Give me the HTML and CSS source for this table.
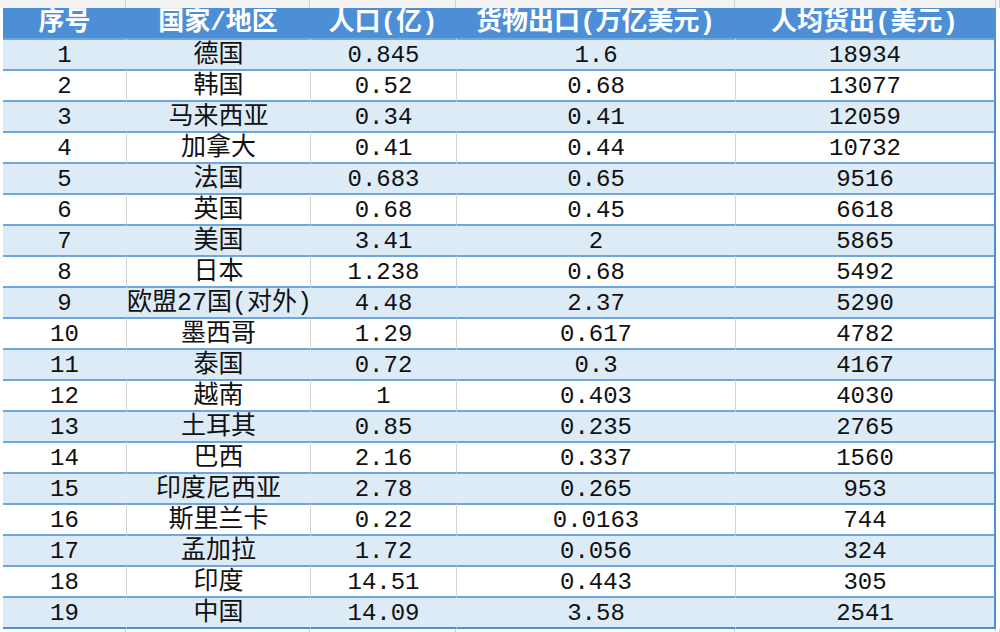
FILE: index.html
```html
<!DOCTYPE html>
<html lang="zh">
<head>
<meta charset="utf-8">
<link rel="stylesheet" href="styles.css">
</head>
<body>
<div class="sheet">
  <div class="strip top">
    <span class="g"></span><span class="g"></span><span class="g"></span><span class="g"></span><span class="g"></span><span class="g"></span>
  </div>
  <table class="data">
    <colgroup>
      <col class="w1"><col class="w2"><col class="w3"><col class="w4"><col class="w5">
    </colgroup>
    <thead>
      <tr><th>序号</th><th>国家/地区</th><th>人口(亿)</th><th>货物出口(万亿美元)</th><th>人均货出(美元)</th></tr>
    </thead>
    <tbody>
      <tr><td class="n">1</td><td class="t">德国</td><td class="n">0.845</td><td class="n">1.6</td><td class="n">18934</td></tr>
      <tr><td class="n">2</td><td class="t">韩国</td><td class="n">0.52</td><td class="n">0.68</td><td class="n">13077</td></tr>
      <tr><td class="n">3</td><td class="t">马来西亚</td><td class="n">0.34</td><td class="n">0.41</td><td class="n">12059</td></tr>
      <tr><td class="n">4</td><td class="t">加拿大</td><td class="n">0.41</td><td class="n">0.44</td><td class="n">10732</td></tr>
      <tr><td class="n">5</td><td class="t">法国</td><td class="n">0.683</td><td class="n">0.65</td><td class="n">9516</td></tr>
      <tr><td class="n">6</td><td class="t">英国</td><td class="n">0.68</td><td class="n">0.45</td><td class="n">6618</td></tr>
      <tr><td class="n">7</td><td class="t">美国</td><td class="n">3.41</td><td class="n">2</td><td class="n">5865</td></tr>
      <tr><td class="n">8</td><td class="t">日本</td><td class="n">1.238</td><td class="n">0.68</td><td class="n">5492</td></tr>
      <tr><td class="n">9</td><td class="t">欧盟27国(对外)</td><td class="n">4.48</td><td class="n">2.37</td><td class="n">5290</td></tr>
      <tr><td class="n">10</td><td class="t">墨西哥</td><td class="n">1.29</td><td class="n">0.617</td><td class="n">4782</td></tr>
      <tr><td class="n">11</td><td class="t">泰国</td><td class="n">0.72</td><td class="n">0.3</td><td class="n">4167</td></tr>
      <tr><td class="n">12</td><td class="t">越南</td><td class="n">1</td><td class="n">0.403</td><td class="n">4030</td></tr>
      <tr><td class="n">13</td><td class="t">土耳其</td><td class="n">0.85</td><td class="n">0.235</td><td class="n">2765</td></tr>
      <tr><td class="n">14</td><td class="t">巴西</td><td class="n">2.16</td><td class="n">0.337</td><td class="n">1560</td></tr>
      <tr><td class="n">15</td><td class="t">印度尼西亚</td><td class="n">2.78</td><td class="n">0.265</td><td class="n">953</td></tr>
      <tr><td class="n">16</td><td class="t">斯里兰卡</td><td class="n">0.22</td><td class="n">0.0163</td><td class="n">744</td></tr>
      <tr><td class="n">17</td><td class="t">孟加拉</td><td class="n">1.72</td><td class="n">0.056</td><td class="n">324</td></tr>
      <tr><td class="n">18</td><td class="t">印度</td><td class="n">14.51</td><td class="n">0.443</td><td class="n">305</td></tr>
      <tr><td class="n">19</td><td class="t">中国</td><td class="n">14.09</td><td class="n">3.58</td><td class="n">2541</td></tr>
    </tbody>
  </table>
  <div class="strip bottom">
    <span class="g"></span><span class="g"></span><span class="g"></span><span class="g"></span><span class="g"></span><span class="g"></span>
  </div>
</div>
</body>
</html>
```

FILE: styles.css
```css
html, body {
  margin: 0;
  padding: 0;
  background: #ffffff;
}

.sheet {
  width: 1000px;
  height: 632px;
  overflow: hidden;
  background: #ffffff;
}

.strip {
  display: grid;
  grid-template-columns: 126px 184px 146px 279px 261px 4px;
  height: 8px;
  background: #f3f3f3;
}

.strip.bottom {
  height: 6px;
  background: #ffffff;
}

.strip .g {
  border-right: 1px solid #d0d0d0;
}

.data {
  border-collapse: separate;
  border-spacing: 0;
  table-layout: fixed;
  margin-left: 3px;
  border-right: 2px solid #4f8fd3;
  box-sizing: border-box;
  width: 993px;
}

.w1 { width: 123px; }
.w2 { width: 184px; }
.w3 { width: 146px; }
.w4 { width: 279px; }
.w5 { width: 259px; }

th {
  box-sizing: border-box;
  height: 29px;
  padding: 0;
  background: #4d8fd6;
  color: #ffffff;
  font-family: "Liberation Mono", "Noto Sans CJK SC", sans-serif;
  font-weight: 700;
  font-size: 26px;
  line-height: 30px;
  text-align: center;
  white-space: nowrap;
}

td {
  box-sizing: border-box;
  height: 31px;
  padding: 3px 0 0 0;
  text-align: center;
  white-space: nowrap;
  color: #111111;
  border-top: 2px solid #6fa6de;
  border-left: 1px solid #d4d4d4;
  line-height: 26px;
}

tbody tr:nth-child(odd) td {
  background: #ddebf7;
  border-left-color: #ddebf7;
}

tbody tr:last-child td {
  height: 33px;
  border-bottom: 2px solid #4f8fd3;
}

td:first-child {
  border-left: none;
}

.n {
  font-family: "Liberation Mono", "DejaVu Sans Mono", monospace;
  font-size: 24px;
}

.t {
  font-family: "Liberation Mono", "Noto Sans CJK SC", sans-serif;
  font-size: 25px;
}
```
